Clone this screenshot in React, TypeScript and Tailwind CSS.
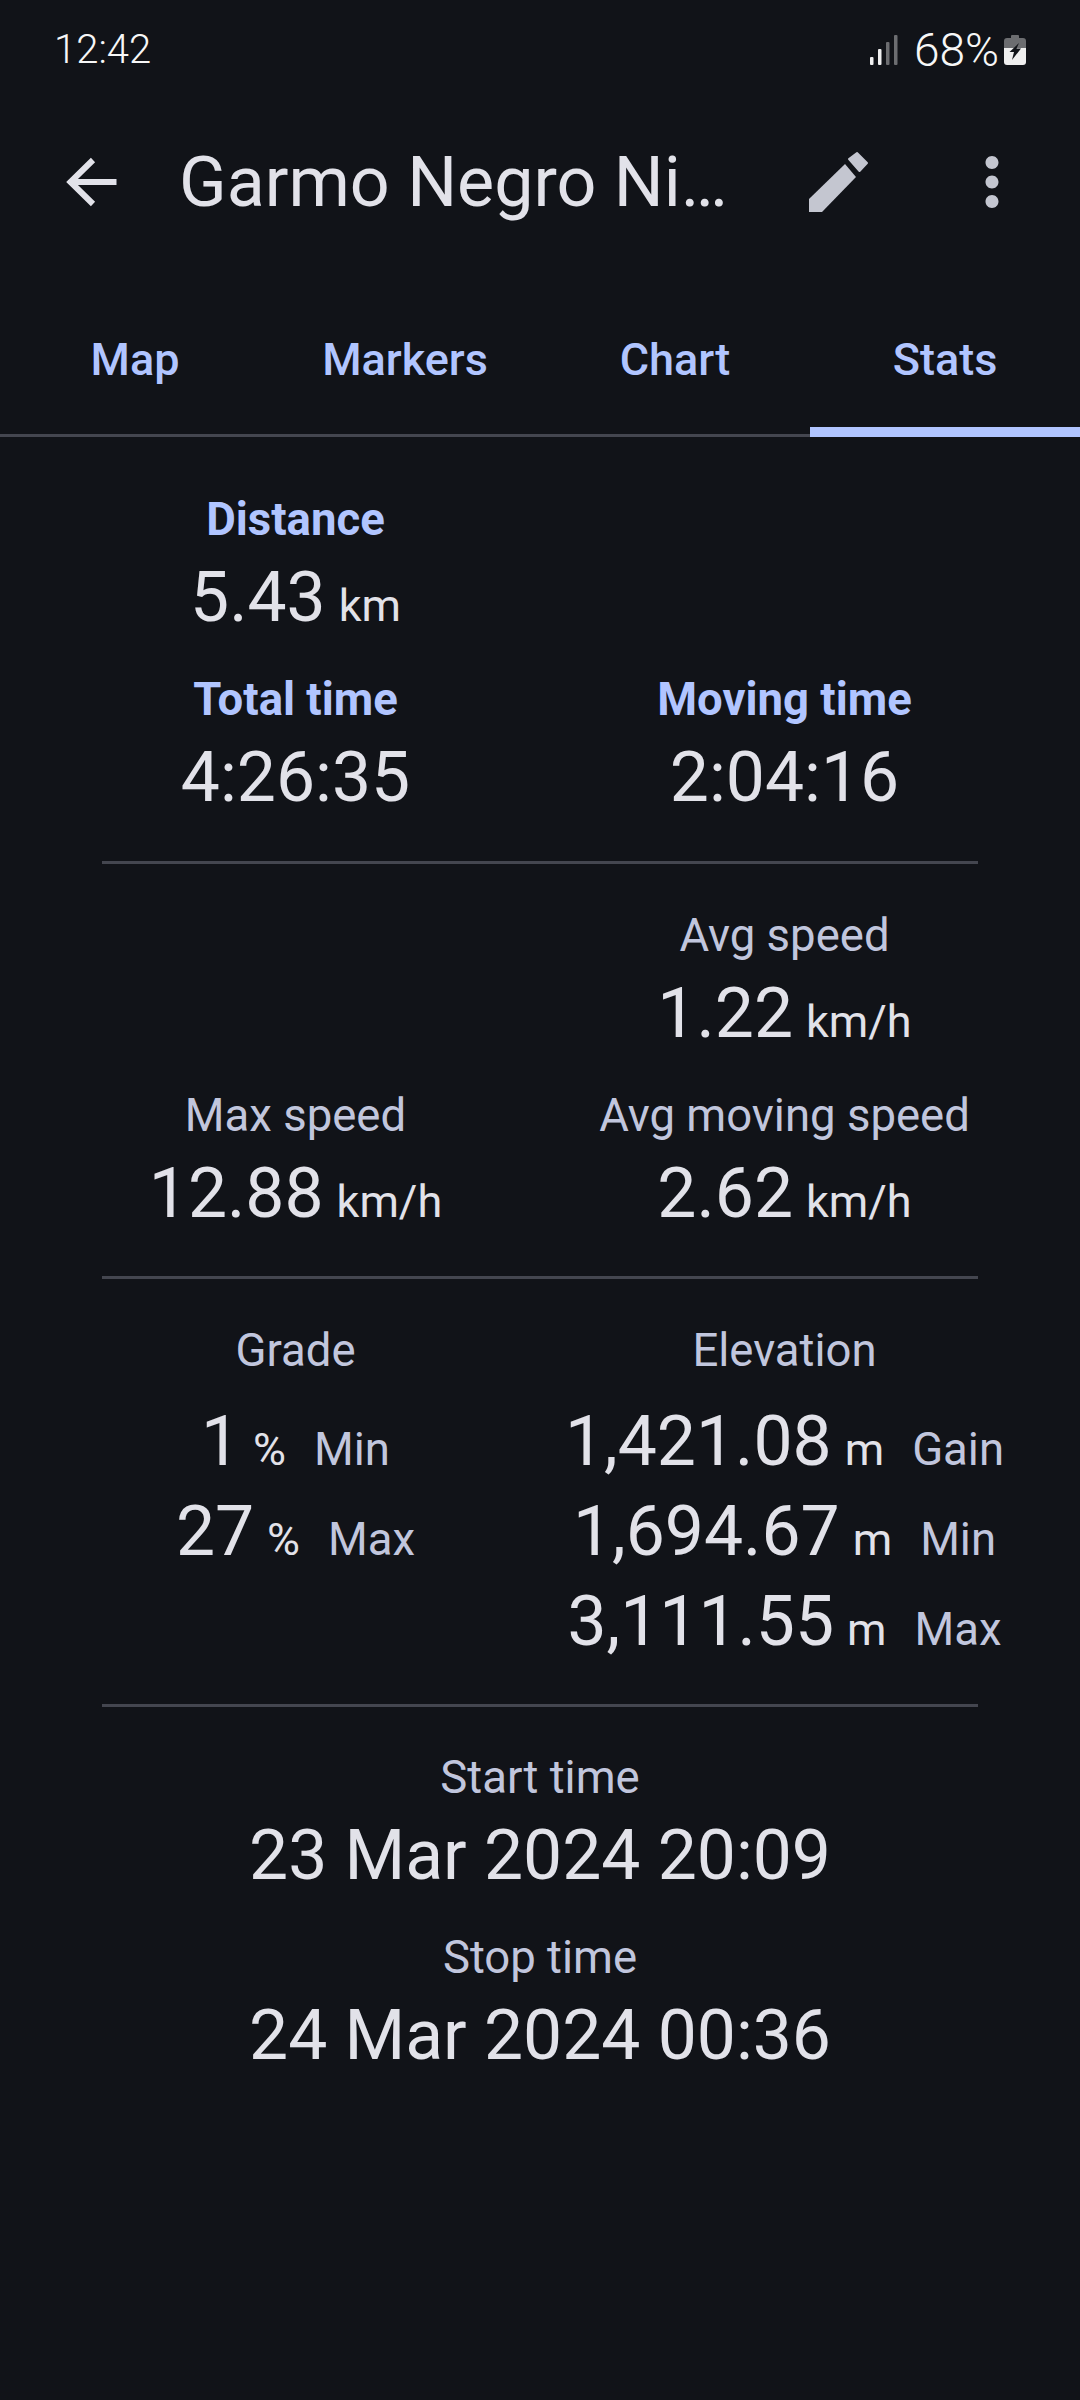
function StatusBar() {
  return (
    <div className="h-[100px] pl-[54px] pr-[54px] flex items-center justify-between text-[#f7f7f7] font-light">
      <span className="text-[40px]">12:42</span>
      <div className="flex items-center">
        <svg width="28" height="30" viewBox="0 0 28 30" className="mr-[16px]">
          <rect x="0" y="22" width="3.5" height="8" rx="1" fill="#f0f0f0" />
          <rect x="8" y="14" width="3.5" height="16" rx="1" fill="#f0f0f0" />
          <rect x="16" y="7" width="3.5" height="23" rx="1" fill="#6c6d70" />
          <rect x="24" y="0" width="3.5" height="30" rx="1" fill="#6c6d70" />
        </svg>
        <span className="text-[46px] leading-[50px]">68%</span>
        <svg width="22" height="30" viewBox="0 0 22 30" className="ml-[5px]">
          <path d="M7 1a1 1 0 0 1 1-1h6a1 1 0 0 1 1 1v2h4a3 3 0 0 1 3 3v7H0V6a3 3 0 0 1 3-3h4z" fill="#6c6d70" />
          <path d="M0 13h22v14a3 3 0 0 1-3 3H3a3 3 0 0 1-3-3z" fill="#efefef" />
          <path d="M15 8 5.500 17H10L8 25 17 13.500H12.500z" fill="#111318" />
        </svg>
      </div>
    </div>
  )
}

function Toolbar() {
  return (
    <div className="h-[164px] flex items-center relative">
      <svg width="78" height="78" viewBox="0 0 78 78" className="ml-[52px] shrink-0" fill="none" stroke="#e2e2e9" strokeWidth="6">
        <path d="M64.500 39H20M41 17 18.500 39 41 61" />
      </svg>
      <span className="ml-[49px] w-[580px] text-[70px] text-[#e2e2e9] whitespace-nowrap">Garmo Negro Ni…</span>
      <svg width="78" height="78" viewBox="0 0 78 78" className="absolute left-[799px] top-[43px]" fill="#c4c6d0">
        <path d="M10 69H23L57 34 46 21 10 56z" />
        <path d="M50 16 58 10 68 20 60.500 28z" stroke="#c4c6d0" strokeWidth="2" strokeLinejoin="round" />
      </svg>
      <svg width="78" height="78" viewBox="0 0 24 24" className="absolute left-[953px] top-[43px]" fill="#c4c6d0">
        <path d="M12 8c1.100 0 2-.9 2-2s-.9-2-2-2-2 .9-2 2 .9 2 2 2zm0 2c-1.100 0-2 .9-2 2s.9 2 2 2 2-.9 2-2-.9-2-2-2zm0 6c-1.100 0-2 .9-2 2s.9 2 2 2 2-.9 2-2-.9-2-2-2z" />
      </svg>
    </div>
  )
}

function Tabs() {
  return (
    <div className="flex h-[173px]">
      {['Map', 'Markers', 'Chart', 'Stats'].map((t) => (
        <div
          key={t}
          className={`w-[270px] pt-[66px] text-center text-[45px] leading-[60px] font-medium text-[#b1c5ff] ${
            t === 'Stats' ? 'border-b-[10px] border-[#b1c5ff]' : 'border-b-[3px] border-[#44464f]'
          }`}
        >
          {t}
        </div>
      ))}
    </div>
  )
}

function Stat({ label, value, unit, bold }: { label: string; value: string; unit?: string; bold?: boolean }) {
  return (
    <div className="text-center">
      <div className={`h-[60px] text-[45.5px] leading-[60px] ${bold ? 'font-bold text-[#b1c5ff]' : 'text-[#c1c6dd]'}`}>{label}</div>
      <div className="h-[96px] leading-[94px] text-[#e2e2e9] whitespace-nowrap">
        <span className="text-[69.6px]">{value}</span>
        {unit && <span className="text-[45px] ml-[13px]">{unit}</span>}
      </div>
    </div>
  )
}

function Divider() {
  return <div className="h-[3px] mx-[102px] bg-[#44464f]" />
}

function MinMax({ value, unit, label }: { value: string; unit: string; label: string }) {
  return (
    <div className="h-[90px] leading-[90px] text-center text-[#e2e2e9] whitespace-nowrap">
      <span className="text-[69.6px]">{value}</span>
      <span className="text-[45px] ml-[13px]">{unit}</span>
      <span className="text-[45.5px] ml-[28px] text-[#c1c6dd]">{label}</span>
    </div>
  )
}

export default function App() {
  return (
    <div className="w-[1080px] h-[2400px] overflow-hidden bg-[#111318] font-['Roboto',sans-serif]">
      <StatusBar />
      <Toolbar />
      <Tabs />
      <div className="pt-[53px] px-[51px] grid grid-cols-2 gap-y-[24px]">
        <Stat label="Distance" value="5.43" unit="km" bold />
        <div />
        <Stat label="Total time" value="4:26:35" bold />
        <Stat label="Moving time" value="2:04:16" bold />
      </div>
      <div className="mt-[35px]">
        <Divider />
      </div>
      <div className="pt-[42px] px-[51px] grid grid-cols-2 gap-y-[24px]">
        <div />
        <Stat label="Avg speed" value="1.22" unit="km/h" />
        <Stat label="Max speed" value="12.88" unit="km/h" />
        <Stat label="Avg moving speed" value="2.62" unit="km/h" />
      </div>
      <div className="mt-[34px]">
        <Divider />
      </div>
      <div className="pt-[42px] px-[51px] grid grid-cols-2">
        <div>
          <div className="h-[60px] leading-[60px] text-[45.5px] text-center text-[#c1c6dd]">Grade</div>
          <div className="mt-[15px]">
            <MinMax value="1" unit="%" label="Min" />
            <MinMax value="27" unit="%" label="Max" />
          </div>
        </div>
        <div>
          <div className="h-[60px] leading-[60px] text-[45.5px] text-center text-[#c1c6dd]">Elevation</div>
          <div className="mt-[15px]">
            <MinMax value="1,421.08" unit="m" label="Gain" />
            <MinMax value="1,694.67" unit="m" label="Min" />
            <MinMax value="3,111.55" unit="m" label="Max" />
          </div>
        </div>
      </div>
      <div className="mt-[38px]">
        <Divider />
      </div>
      <div className="pt-[41px] px-[51px] flex flex-col gap-y-[24px]">
        <Stat label="Start time" value="23 Mar 2024 20:09" />
        <Stat label="Stop time" value="24 Mar 2024 00:36" />
      </div>
    </div>
  )
}
